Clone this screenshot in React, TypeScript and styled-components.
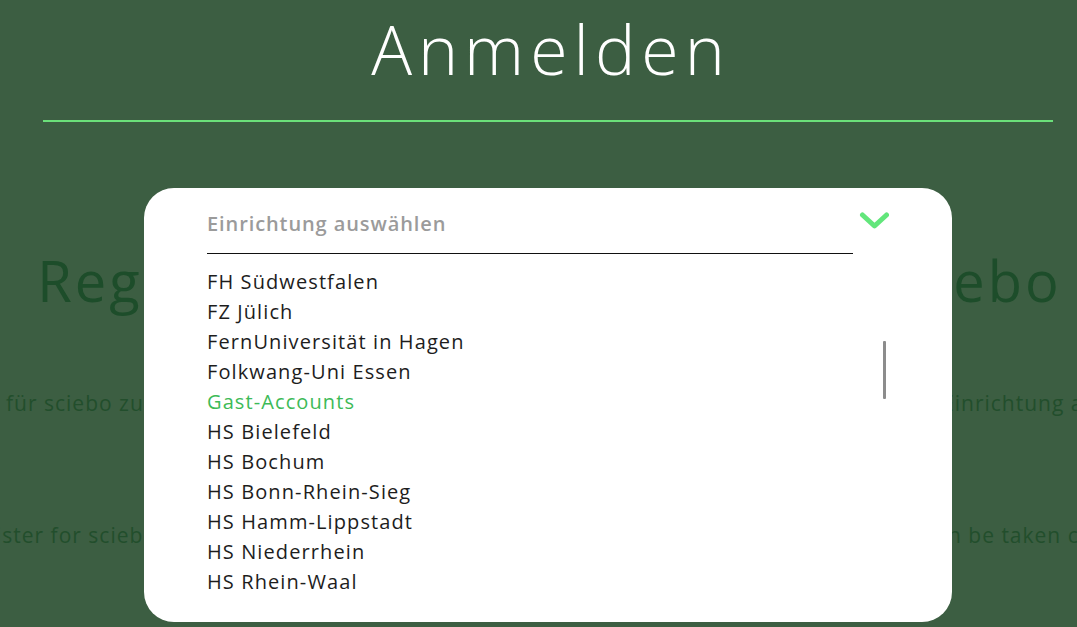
import styled, { createGlobalStyle } from 'styled-components';

const institutions = [
  { name: 'FH Südwestfalen' },
  { name: 'FZ Jülich' },
  { name: 'FernUniversität in Hagen' },
  { name: 'Folkwang-Uni Essen' },
  { name: 'Gast-Accounts', active: true },
  { name: 'HS Bielefeld' },
  { name: 'HS Bochum' },
  { name: 'HS Bonn-Rhein-Sieg' },
  { name: 'HS Hamm-Lippstadt' },
  { name: 'HS Niederrhein' },
  { name: 'HS Rhein-Waal' },
  { name: 'HS Ruhr West' },
];

const GlobalStyle = createGlobalStyle`
  html, body {
    margin: 0;
    padding: 0;
    height: 100%;
    overflow: hidden;
    background: #3c5e42;
    font-family: 'Open Sans', 'Liberation Sans', sans-serif;
  }
`;

const Page = styled.div`
  position: relative;
  width: 100%;
  height: 627px;
  overflow: hidden;
`;

const Header = styled.header`
  display: flex;
  flex-direction: column;
  align-items: center;
  margin: 0 24px 0 43px;
  padding-top: 6px;
`;

const Title = styled.h1`
  margin: 0;
  padding-left: 6px;
  font-weight: 300;
  font-size: 68px;
  line-height: 86px;
  letter-spacing: 6px;
  color: #ffffff;
`;

const Rule = styled.div`
  align-self: stretch;
  height: 2px;
  margin-top: 28px;
  background: #6be07a;
`;

const Content = styled.section`
  display: flex;
  flex-direction: column;
  align-items: center;
  padding-top: 128px;
  color: #224e2c;
`;

const SubTitle = styled.h2`
  margin: 0;
  padding-left: 22px;
  font-weight: 500;
  font-size: 56px;
  line-height: 60px;
  letter-spacing: 3.1px;
  white-space: nowrap;
  color: #1d4d2a;
`;

const Text = styled.p<{ $top: number; $shift?: number }>`
  margin: ${p => p.$top}px 0 0;
  padding-right: ${p => p.$shift ?? 0}px;
  font-size: 21px;
  line-height: 28px;
  letter-spacing: 1px;
  white-space: nowrap;
`;

const Modal = styled.div`
  position: absolute;
  left: 144px;
  top: 188px;
  width: 808px;
  height: 434px;
  box-sizing: border-box;
  padding: 18px 63px 0 63px;
  background: #ffffff;
  border-radius: 30px;
  display: flex;
  flex-direction: column;
`;

const SelectHead = styled.div`
  display: flex;
  align-items: flex-start;
`;

const Field = styled.div`
  flex: none;
  width: 646px;
  height: 48px;
  box-sizing: border-box;
  border-bottom: 1px solid #111;
  font-size: 20px;
  font-weight: 600;
  letter-spacing: 0.9px;
  line-height: 36px;
  color: #9b9b9b;
`;

const Chevron = styled.svg`
  flex: none;
  margin-top: 4px;
`;

const Body = styled.div`
  display: flex;
  margin-top: 13px;
  height: 322px;
`;

const List = styled.ul`
  flex: 1;
  margin: 0;
  padding: 0;
  list-style: none;
  overflow: hidden;
`;

const Item = styled.li<{ $active?: boolean }>`
  font-size: 20px;
  line-height: 30px;
  font-weight: 500;
  letter-spacing: 1.1px;
  color: ${p => (p.$active ? '#3dba57' : '#1d1d1d')};
  white-space: nowrap;
`;

const Track = styled.div`
  flex: none;
  width: 6px;
`;

const Thumb = styled.div`
  width: 3px;
  height: 58px;
  margin-top: 74px;
  background: #8c8c8c;
  border-radius: 1px;
`;

export default function App() {
  return (
    <Page>
      <GlobalStyle />
      <Header>
        <Title>Anmelden</Title>
        <Rule />
      </Header>
      <Content>
        <SubTitle>Registrierung für den Dienst sciebo</SubTitle>
        <Text $top={79} $shift={48}>
          Um sich für sciebo zu registrieren, wählen Sie bitte in der folgenden Auswahlliste zunächst Ihre Einrichtung aus.
        </Text>
        <Text $top={104}>
          To register for sciebo, please now select your institution from the list first. Registration can then be taken care of.
        </Text>
      </Content>
      <Modal>
        <SelectHead>
          <Field>Einrichtung auswählen</Field>
          <Chevron width="36" height="22" viewBox="0 0 36 22">
            <path
              d="M9.5 5 L21.5 16 L33.5 5"
              fill="none"
              stroke="#62e67b"
              strokeWidth="5"
              strokeLinecap="round"
              strokeLinejoin="round"
            />
          </Chevron>
        </SelectHead>
        <Body>
          <List>
            {institutions.map(i => (
              <Item key={i.name} $active={i.active}>
                {i.name}
              </Item>
            ))}
          </List>
          <Track>
            <Thumb />
          </Track>
        </Body>
      </Modal>
    </Page>
  );
}
